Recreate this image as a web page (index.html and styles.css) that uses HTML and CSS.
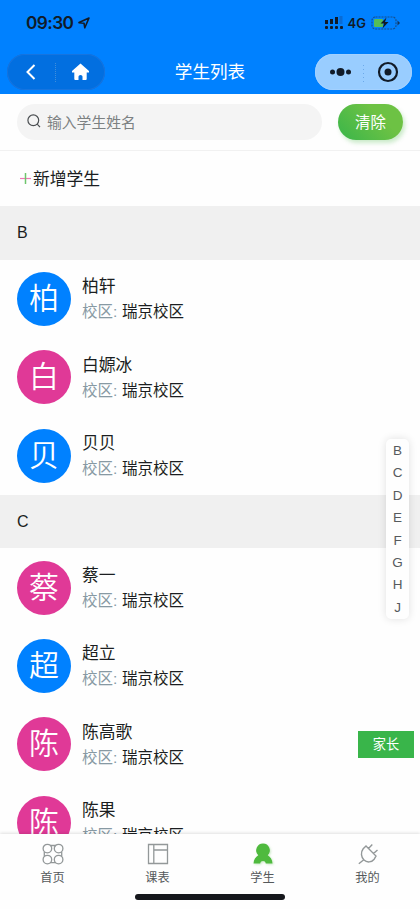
FILE: index.html
```html
<!DOCTYPE html>
<html lang="zh-CN">
<head>
<meta charset="utf-8">
<meta name="viewport" content="width=device-width, initial-scale=1">
<title>学生列表</title>
<link rel="stylesheet" href="styles.css">
</head>
<body>
<div class="app">
  <header class="header">
    <div class="status">
      <span class="time">09:30</span>
      <svg class="locate" width="12" height="12" viewBox="0 0 12 12"><path d="M1 5.600 11 1 6.800 10.800 6 6.200Z" fill="none" stroke="#111b28" stroke-width="1.600" stroke-linejoin="round"/></svg>
      <svg class="signal" width="19" height="13" viewBox="0 0 19 13"><g fill="#111b28"><rect x="1" y="4" width="3" height="4"/><rect x="6" y="3" width="3" height="5"/><rect x="11" y="1" width="3" height="7"/><rect x="1" y="10" width="3" height="3" rx="1"/><rect x="6" y="10" width="3" height="3" rx="1"/><rect x="11" y="10" width="3" height="3" rx="1"/><rect x="16" y="10" width="3" height="3" rx="1"/></g><rect x="15.500" y="0" width="3" height="8" fill="#086bd5"/></svg>
      <span class="network">4G</span>
      <svg class="battery" width="29" height="14" viewBox="0 0 29 14"><rect x="1" y="1" width="24" height="12" rx="3.500" fill="none" stroke="#17508c" stroke-width="1.200" stroke-dasharray="2 1"/><path d="M26.500 4.500 29 7l-2.500 2.500Z" fill="#12345d"/><rect x="3" y="3" width="9" height="8" rx="1" fill="#55bd58"/><path d="M15.500 1.500 9.500 7.500h3.500l-1.500 5 6-6.500H14Z" fill="#111b28"/></svg>
    </div>
    <div class="nav">
      <div class="pill pill-dark">
        <svg width="98" height="36" viewBox="0 0 98 36"><path d="m27.500 11-7 7 7 7" fill="none" stroke="#fff" stroke-width="2"/><path d="M48.500 9v19" stroke="#3f8edb" stroke-dasharray="1 1"/><path d="M73.500 9.500 65 17v1.500h2.300V25q0 1 1 1h3.200v-3.500q0-1.500 2-1.500t2 1.500V26h3.200q1 0 1-1v-6.500H82V17Z" fill="#fff"/></svg>
      </div>
      <h1 class="title">学生列表</h1>
      <div class="pill pill-light">
        <svg width="97" height="36" viewBox="0 0 97 36"><g fill="#111b28"><circle cx="17.500" cy="18" r="2.500"/><circle cx="25.500" cy="18" r="4"/><circle cx="33.500" cy="18" r="2.500"/><circle cx="73" cy="18" r="3.500"/></g><circle cx="73" cy="18" r="9" fill="none" stroke="#111b28" stroke-width="2.200"/><path d="M48.500 11v17" stroke="#6ca9e9" stroke-dasharray="1 3"/></svg>
      </div>
    </div>
  </header>

  <div class="search-row">
    <div class="search">
      <svg width="14" height="14" viewBox="0 0 14 14" fill="none" stroke="#4b4f52" stroke-width="1.200"><circle cx="6.300" cy="6.300" r="5.400"/><path d="m10.200 10.200 2.800 3"/></svg>
      <span>输入学生姓名</span>
    </div>
    <button class="clear">清除</button>
  </div>
  <div class="add">
    <svg width="11" height="11" viewBox="0 0 11 11"><path d="M0 5.500h11" stroke="#ef78b4" stroke-width="1.200"/><path d="M5.500 0v11" stroke="#6ec56c" stroke-width="1.500"/></svg>
    <span>新增学生</span>
  </div>

  <main class="list">
    <h2 class="letter">B</h2>
    <div class="student"><div class="avatar">柏</div><div class="info"><div class="name">柏轩</div><div class="campus"><span class="label">校区:</span>瑞京校区</div></div></div>
    <div class="student"><div class="avatar pink">白</div><div class="info"><div class="name">白嫄冰</div><div class="campus"><span class="label">校区:</span>瑞京校区</div></div></div>
    <div class="student"><div class="avatar">贝</div><div class="info"><div class="name">贝贝</div><div class="campus"><span class="label">校区:</span>瑞京校区</div></div></div>
    <h2 class="letter">C</h2>
    <div class="student"><div class="avatar pink">蔡</div><div class="info"><div class="name">蔡一</div><div class="campus"><span class="label">校区:</span>瑞京校区</div></div></div>
    <div class="student"><div class="avatar">超</div><div class="info"><div class="name">超立</div><div class="campus"><span class="label">校区:</span>瑞京校区</div></div></div>
    <div class="student"><div class="avatar pink">陈</div><div class="info"><div class="name">陈高歌</div><div class="campus"><span class="label">校区:</span>瑞京校区</div></div><span class="parent">家长</span></div>
    <div class="student"><div class="avatar pink">陈</div><div class="info"><div class="name">陈果</div><div class="campus"><span class="label">校区:</span>瑞京校区</div></div></div>
  </main>

  <nav class="tabs">
    <div class="tab">
      <svg width="24" height="24" viewBox="0 0 24 24" fill="none" stroke="#939899" stroke-width="1.300"><circle cx="6.400" cy="6.600" r="4.300"/><circle cx="17.600" cy="6.600" r="4.300"/><circle cx="6.400" cy="17.600" r="4.300"/><circle cx="17.600" cy="17.600" r="4.300"/><path d="M9 3.500h6M9 20.700h6M3.300 10v4.200M20.700 10v4.200"/></svg>
      <span>首页</span>
    </div>
    <div class="tab">
      <svg width="24" height="24" viewBox="0 0 24 24" fill="none" stroke="#939899" stroke-width="1.300"><path d="M2.500 2.500h19v19h-19ZM7.800 2.500v19M7.800 8h13.700"/></svg>
      <span>课表</span>
    </div>
    <div class="tab">
      <svg class="active-icon" width="24" height="24" viewBox="0 0 24 24"><path d="M12 1.500a6.800 6.800 0 0 1 4.700 11.700c2.700 1.600 4.600 4.400 4.800 8.300h-6.700c-.3-3.300-5.300-3.300-5.600 0H2.500c.2-3.900 2.100-6.700 4.800-8.300A6.800 6.800 0 0 1 12 1.500Z" fill="#4fba3e"/></svg>
      <span>学生</span>
    </div>
    <div class="tab">
      <svg width="24" height="24" viewBox="0 0 24 24" fill="none" stroke="#939899" stroke-width="1.400"><path d="m10 4 10 10-1.800 3.200c-2.700 3.400-7.300 3.600-10.200.8S4.400 10.300 7.200 6.700ZM7.500 18l-4.700 3.700M12.500 6.500l3.800-4M17.500 11.500l4-3.500"/></svg>
      <span>我的</span>
    </div>
    <div class="home-bar"></div>
  </nav>

  <div class="index"><span>B</span><span>C</span><span>D</span><span>E</span><span>F</span><span>G</span><span>H</span><span>J</span></div>
</div>
</body>
</html>
```
FILE: styles.css
```css
* { box-sizing: border-box; }
body {
  margin: 0;
  font-family: "Liberation Sans", "Noto Sans CJK SC", sans-serif;
  color: #1b1e21;
  background: #fefefe;
}
svg { display: block; flex: none; }
.app {
  position: relative;
  display: flex;
  flex-direction: column;
  height: 909px;
  overflow: hidden;
}
.header { flex: none; height: 94px; background: #0081ff; }
.status {
  display: flex;
  align-items: center;
  height: 45px;
  padding: 0 20px 0 26px;
  color: #111b28;
}
.time {
  width: 48px;
  font: 600 17.300px/20px Inter, sans-serif;
  letter-spacing: -0.600px;
}
.locate { margin-left: 4px; }
.signal { margin-left: auto; }
.network { margin: 1px 5px 0; font: 600 13px/16px Inter, sans-serif; }
.nav {
  display: flex;
  align-items: center;
  justify-content: space-between;
  height: 49px;
  padding: 4px 8px 0 7px;
}
.pill { height: 36px; border-radius: 18px; overflow: hidden; }
.pill-dark { width: 98px; background: #026fe0; box-shadow: inset 0 0 0 1px #1674df; }
.pill-light { width: 97px; background: #99cdff; box-shadow: inset 0 0 0 1px #a3d1ff; }
.title { margin: 0; font-size: 17.600px; font-weight: 400; line-height: 26px; color: #fff; }
.search-row {
  display: flex;
  flex: none;
  align-items: center;
  justify-content: space-between;
  height: 57px;
  padding: 0 17px;
  border-bottom: 1px solid #f1f1f1;
}
.search {
  display: flex;
  align-items: center;
  width: 305px;
  height: 36px;
  padding: 0 0 2px 10px;
  gap: 6px;
  border-radius: 18px;
  background: #f4f4f4;
  color: #7c8182;
  font-size: 14.800px;
}
.clear {
  width: 65px;
  height: 36px;
  padding: 0 0 2px;
  border: 0;
  border-radius: 18px;
  background: linear-gradient(45deg, #39b54a, #6dc244 65%);
  box-shadow: 2px 3px 4px rgba(70, 184, 66, .28);
  color: #fff;
  font: inherit;
  font-size: 15.400px;
}
.add {
  display: flex;
  flex: none;
  align-items: center;
  gap: 2px;
  height: 55px;
  padding: 0 0 2px 20px;
  font-size: 16.800px;
}
.add svg { margin-top: 2px; }
.list { flex: 1; min-height: 0; overflow: hidden; }
.letter {
  height: 53.700px;
  margin: 0;
  padding-left: 17px;
  background: #f0f0f0;
  font-size: 16px;
  font-weight: 400;
  line-height: 54px;
}
.student {
  display: flex;
  align-items: center;
  height: 78.330px;
  padding: 0 6px 0 17px;
}
.avatar {
  flex: none;
  width: 54px;
  height: 54px;
  border-radius: 50%;
  background: #0081ff;
  color: #fff;
  font-size: 30px;
  font-weight: 350;
  line-height: 54px;
  text-align: center;
}
.pink { background: #e03997; }
.info { margin-left: 11px; padding-top: 1px; }
.name { font-size: 16.800px; line-height: 25px; }
.campus { font-size: 15.500px; line-height: 25px; }
.label { display: inline-block; width: 40px; color: #8799a3; }
.parent {
  width: 56px;
  height: 27px;
  margin-left: auto;
  background: #39b54a;
  color: #fff;
  font-size: 13.200px;
  line-height: 27px;
  text-align: center;
}
.tabs {
  position: relative;
  display: grid;
  grid-template-columns: repeat(4, 1fr);
  flex: none;
  height: 75px;
  padding-top: 8px;
  background: #fefefe;
  box-shadow: 0 -1px 3px rgba(0, 0, 0, .12);
}
.tab {
  display: flex;
  flex-direction: column;
  align-items: center;
  gap: 4px;
  color: #55595b;
  font-size: 12.200px;
  line-height: 17px;
}
.active-icon { filter: drop-shadow(1px 1px 1px rgba(80, 186, 62, .3)); }
.home-bar {
  position: absolute;
  left: 135px;
  bottom: 9px;
  width: 150px;
  height: 6px;
  border-radius: 3px;
  background: #15171c;
}
.index {
  position: absolute;
  top: 439px;
  right: 11px;
  display: flex;
  flex-direction: column;
  width: 23px;
  height: 180px;
  padding-top: 1px;
  border-radius: 5px;
  background: #fefefe;
  box-shadow: 0 0 8px rgba(0, 0, 0, .12);
  color: #565a5d;
  font-size: 13.500px;
  text-align: center;
}
.index span { height: 22.375px; line-height: 22.375px; }
```
